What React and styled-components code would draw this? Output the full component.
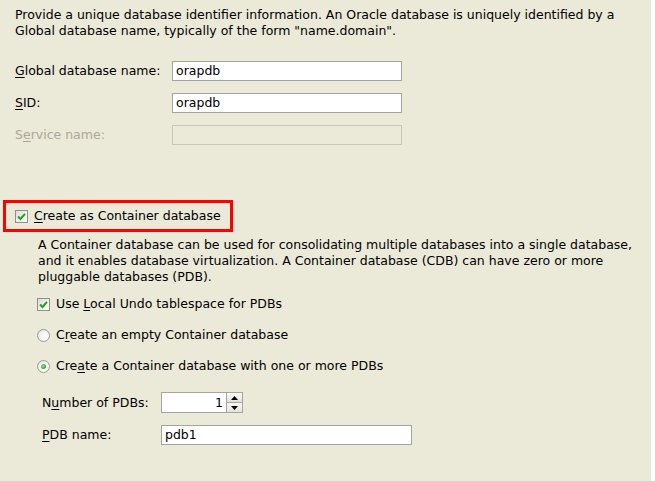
import React from "react";
import styled, { createGlobalStyle } from "styled-components";

const GlobalStyle = createGlobalStyle`
  html, body {
    margin: 0;
    padding: 0;
    background: #ffffff;
  }
  body {
    font-family: "DejaVu Sans", Verdana, sans-serif;
    font-size: 12.5px;
    color: #000;
  }
`;

const Page = styled.div`
  width: 651px;
  height: 481px;
  box-sizing: border-box;
  background: #ebe9d8;
  padding: 7px 15px 0 15px;
  line-height: 16px;
`;

const Intro = styled.p`
  margin: 0 0 22px 0;
  white-space: nowrap;
`;

const FormGrid = styled.div`
  display: grid;
  grid-template-columns: ${(p) => p.$labelWidth}px auto;
  row-gap: 12px;
  align-items: center;
  justify-content: start;
  margin-left: ${(p) => p.$indent || 0}px;
`;

const Label = styled.label`
  color: ${(p) => (p.$disabled ? "#aca899" : "#000")};
  white-space: nowrap;
`;

const TextField = styled.div`
  box-sizing: border-box;
  width: ${(p) => p.$width}px;
  height: 20px;
  border: 1px solid ${(p) => (p.$disabled ? "#c9c6b8" : "#a5a5a0")};
  background: ${(p) => (p.$disabled ? "#ebe9d8" : "#ffffff")};
  padding: 0 3px;
  line-height: 18px;
  text-align: ${(p) => (p.$right ? "right" : "left")};
`;

const HighlightBox = styled.div`
  box-sizing: border-box;
  width: 230px;
  height: 32px;
  margin: 55px 0 0 -12px;
  border: 3px solid #ff0000;
  padding-left: 9px;
  display: flex;
  align-items: center;
  gap: 6px;
  white-space: nowrap;
`;

const Description = styled.p`
  margin: 5px 0 11px 23px;
  white-space: nowrap;
`;

const OptionList = styled.div`
  display: flex;
  flex-direction: column;
  gap: 15px;
  margin-left: 22px;
`;

const Option = styled.div`
  display: flex;
  align-items: center;
  gap: 6px;
  height: 16px;
`;

const CheckBox = styled.span`
  box-sizing: border-box;
  width: 13px;
  height: 13px;
  border: 1px solid #8e8f8f;
  background: linear-gradient(135deg, #dcdcd6 0%, #f6f6f4 70%, #ffffff 100%);
  display: inline-flex;
  align-items: center;
  justify-content: center;
  flex: none;
`;

const Radio = styled.span`
  box-sizing: border-box;
  width: 13px;
  height: 13px;
  border-radius: 50%;
  border: 1px solid #9a9a96;
  background: radial-gradient(circle at 65% 65%, #ffffff 0%, #f2f2ee 55%, #d8d8d2 100%);
  display: inline-flex;
  align-items: center;
  justify-content: center;
  flex: none;
`;

const RadioDot = styled.span`
  width: 5px;
  height: 5px;
  border-radius: 50%;
  background: radial-gradient(circle at 40% 40%, #8ee08a 0%, #2ea52a 70%);
`;

const PdbGrid = styled(FormGrid)`
  margin-top: 18px;
`;

const Spinner = styled.div`
  display: flex;
  height: 21px;
`;

const SpinField = styled(TextField)`
  height: 21px;
  line-height: 19px;
  border-right: none;
`;

const SpinButtons = styled.div`
  box-sizing: border-box;
  width: 17px;
  height: 21px;
  border: 1px solid #a5a5a0;
  display: flex;
  flex-direction: column;
`;

const SpinButton = styled.div`
  flex: 1;
  display: flex;
  align-items: center;
  justify-content: center;
  background: linear-gradient(#fbfbf9, #e3e1d6);
  border-top: ${(p) => (p.$lower ? "1px solid #a5a5a0" : "none")};
`;

const Mn = styled.span`
  text-decoration: underline;
  text-underline-offset: 2px;
`;

const Check = () => (
  <svg width="9" height="9" viewBox="0 0 9 9">
    <path d="M1 4.5 L3.5 7 L8 1.8" fill="none" stroke="#21a121" strokeWidth="2" />
  </svg>
);

const Arrow = ({ down }) => (
  <svg width="7" height="4" viewBox="0 0 7 4">
    <path d={down ? "M0 0 H7 L3.5 4 Z" : "M0 4 H7 L3.5 0 Z"} fill="#000" />
  </svg>
);

export default function App() {
  return (
    <>
      <GlobalStyle />
      <Page>
        <Intro>
          Provide a unique database identifier information. An Oracle database is uniquely identified by a
          <br />
          Global database name, typically of the form "name.domain".
        </Intro>

        <FormGrid $labelWidth={157}>
          <Label>
            <Mn>G</Mn>lobal database name:
          </Label>
          <TextField $width={230}>orapdb</TextField>
          <Label>
            <Mn>S</Mn>ID:
          </Label>
          <TextField $width={230}>orapdb</TextField>
          <Label $disabled>
            S<Mn>e</Mn>rvice name:
          </Label>
          <TextField $width={230} $disabled />
        </FormGrid>

        <HighlightBox>
          <CheckBox>
            <Check />
          </CheckBox>
          <span>
            <Mn>C</Mn>reate as Container database
          </span>
        </HighlightBox>

        <Description>
          A Container database can be used for consolidating multiple databases into a single database,
          <br />
          and it enables database virtualization. A Container database (CDB) can have zero or more
          <br />
          pluggable databases (PDB).
        </Description>

        <OptionList>
          <Option>
            <CheckBox>
              <Check />
            </CheckBox>
            <span>
              Use <Mn>L</Mn>ocal Undo tablespace for PDBs
            </span>
          </Option>
          <Option>
            <Radio />
            <span>
              C<Mn>r</Mn>eate an empty Container database
            </span>
          </Option>
          <Option>
            <Radio>
              <RadioDot />
            </Radio>
            <span>
              Cre<Mn>a</Mn>te a Container database with one or more PDBs
            </span>
          </Option>
        </OptionList>

        <PdbGrid $labelWidth={119} $indent={27}>
          <Label>
            N<Mn>u</Mn>mber of PDBs:
          </Label>
          <Spinner>
            <SpinField $width={65} $right>
              1
            </SpinField>
            <SpinButtons>
              <SpinButton>
                <Arrow />
              </SpinButton>
              <SpinButton $lower>
                <Arrow down />
              </SpinButton>
            </SpinButtons>
          </Spinner>
          <Label>
            <Mn>P</Mn>DB name:
          </Label>
          <TextField $width={251}>pdb1</TextField>
        </PdbGrid>
      </Page>
    </>
  );
}
